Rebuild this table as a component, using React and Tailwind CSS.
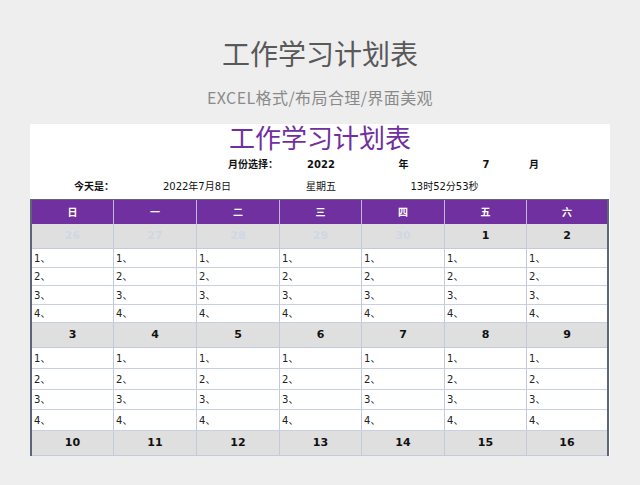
const weekdays = ["日", "一", "二", "三", "四", "五", "六"];

const cols = [
  "w-[82px]",
  "w-[83px]",
  "w-[83px]",
  "w-[82px]",
  "w-[83px]",
  "w-[82px]",
  "w-[80px]",
];

const weeks = [
  {
    days: [
      { n: 26, dim: true },
      { n: 27, dim: true },
      { n: 28, dim: true },
      { n: 29, dim: true },
      { n: 30, dim: true },
      { n: 1 },
      { n: 2 },
    ],
    rows: ["h-[19px]", "h-[18px]", "h-[19px]", "h-[18px]"],
  },
  {
    days: [3, 4, 5, 6, 7, 8, 9].map((n) => ({ n })),
    rows: ["h-[21px]", "h-[21px]", "h-[20px]", "h-[21px]"],
  },
  {
    days: [10, 11, 12, 13, 14, 15, 16].map((n) => ({ n })),
    rows: [],
  },
];

function DayRow({ days }) {
  return (
    <div className="flex h-[25px] bg-[#dfdfdf] border-b border-[#c3cadb]">
      {days.map((d, i) => (
        <div
          key={i}
          className={`${cols[i]} shrink-0 flex items-center justify-center text-[11px] font-bold ${
            i < 6 ? "border-r border-[#c3cadb]" : ""
          } ${d.dim ? "text-[#d0d8e6]" : "text-[#111]"}`}
        >
          {d.n}
        </div>
      ))}
    </div>
  );
}

function ItemRow({ num, h }) {
  return (
    <div className={`flex ${h} bg-white border-b border-[#c8cfe0]`}>
      {cols.map((w, i) => (
        <div
          key={i}
          className={`${w} shrink-0 flex items-center pl-[2px] text-[10px] text-[#222] ${
            i < 6 ? "border-r border-[#c3cadb]" : ""
          }`}
        >
          {num}、
        </div>
      ))}
    </div>
  );
}

export default function App() {
  return (
    <div className="w-[640px] h-[485px] bg-[#eeeeee] overflow-hidden font-['Noto_Sans_CJK_SC',sans-serif]">
      <div className="pt-[36px] text-center text-[28px] leading-[34px] text-[#595959]">
        工作学习计划表
      </div>
      <div className="mt-[16px] text-center text-[16px] leading-[22px] text-[#8a8a8a] tracking-[0.4px]">
        EXCEL格式/布局合理/界面美观
      </div>

      <div className="mt-[16px] ml-[30px] w-[580px] bg-white font-['DejaVu_Sans','Noto_Sans_CJK_SC',sans-serif]">
        <div className="h-[30px] text-center text-[26px] leading-[26px] text-[#7030a0] font-['Noto_Sans_CJK_SC',sans-serif]">
          工作学习计划表
        </div>

        <div className="flex h-[21px] items-center text-[10px] font-bold text-[#111] pl-[2px]">
          <div className="w-[248px] shrink-0 text-right pr-[2px]">月份选择：</div>
          <div className="w-[82px] shrink-0 text-center">2022</div>
          <div className="w-[83px] shrink-0 text-center">年</div>
          <div className="w-[82px] shrink-0 text-center">7</div>
          <div className="w-[80px] shrink-0 pl-[2px]">月</div>
        </div>

        <div className="flex h-[22px] items-center text-[10px] text-[#111] pl-[2px]">
          <div className="w-[82px] shrink-0 text-right font-bold">今天是：</div>
          <div className="w-[166px] shrink-0 text-center">2022年7月8日</div>
          <div className="w-[82px] shrink-0 text-center">星期五</div>
          <div className="w-[165px] shrink-0 text-center">13时52分53秒</div>
        </div>

        <div className="mt-[2px] border-l-2 border-r-2 border-t border-[#5d6678] w-[579px]">
          <div className="flex h-[24px] bg-[#7030a0]">
            {weekdays.map((d, i) => (
              <div
                key={d}
                className={`${cols[i]} shrink-0 flex items-center justify-center text-[10px] font-bold text-white ${
                  i < 6 ? "border-r border-[#c9b2dc]" : ""
                }`}
              >
                {d}
              </div>
            ))}
          </div>
          {weeks.map((w, wi) => (
            <div key={wi}>
              <DayRow days={w.days} />
              {w.rows.map((h, ri) => (
                <ItemRow key={ri} num={ri + 1} h={h} />
              ))}
            </div>
          ))}
        </div>
      </div>
    </div>
  );
}
